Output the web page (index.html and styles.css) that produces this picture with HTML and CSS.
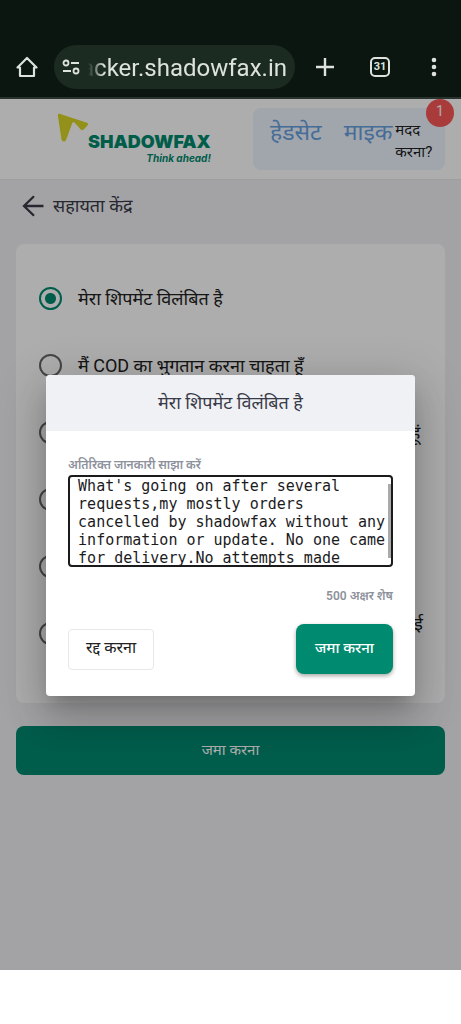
FILE: index.html
```html
<!DOCTYPE html>
<html lang="hi">
<head>
<meta charset="utf-8">
<meta name="viewport" content="width=device-width, initial-scale=1">
<title>सहायता केंद्र</title>
<link rel="stylesheet" href="styles.css">
</head>
<body>
<div class="browser">
  <button class="tool" aria-label="Home"><svg width="22" height="22" viewBox="0 0 22 22" fill="none" stroke="currentColor" stroke-width="2.200" stroke-linejoin="round"><path d="M1.500 11.500 11 2l9.500 9.500H18V20H4v-8.500z"/></svg></button>
  <div class="address">
    <svg width="18" height="16" viewBox="0 0 18 16" fill="none" stroke="currentColor" stroke-width="1.800"><circle cx="4" cy="4" r="2.500"/><path d="M9 4h8M1 12h8"/><circle cx="14" cy="12" r="2.500"/></svg>
    <span class="url">acker.shadowfax.in</span>
  </div>
  <div class="tools">
    <button class="tool" aria-label="New tab"><svg width="20" height="20" viewBox="0 0 20 20" fill="none" stroke="currentColor" stroke-width="2.400"><path d="M10 1v18M1 10h18"/></svg></button>
    <button class="tool tabs" aria-label="Tabs">31</button>
    <button class="tool menu" aria-label="Menu"><svg width="6" height="20" viewBox="0 0 6 20" fill="currentColor"><circle cx="3" cy="3" r="2.300"/><circle cx="3" cy="10" r="2.300"/><circle cx="3" cy="17" r="2.300"/></svg></button>
  </div>
</div>

<div class="app">
  <header class="header">
    <div class="logo">
      <svg class="mark" width="33" height="30" viewBox="0 0 33 30" fill="#dbd627"><path d="M2.500.800 30 9.800q2 .900.700 2.500l-4 4.300q-1.500 1.300-3 0l-6-6.800q-1.500-1.500-2.500.500L9 27.300q-1 1.600-2.700 1.200-1.600-.300-1.800-2L.800 2.300Q.600.300 2.500.800z"/></svg>
      <div class="words"><span class="brand">SHADOWFAX</span><span class="tagline">Think ahead!</span></div>
    </div>
    <a class="help" href="#help">
      <span class="help-icon">हेडसेट</span>
      <span class="help-icon">माइक</span>
      <span class="help-text">मदद करना?</span>
      <span class="badge">1</span>
    </a>
  </header>

  <main class="main">
    <div class="crumb">
      <button class="back" aria-label="Back"><svg width="22" height="22" viewBox="0 0 22 22" fill="none" stroke="currentColor" stroke-width="2.300"><path d="M21.500 11H2M12 1.200 2 11l10 9.800"/></svg></button>
      <h1 class="title">सहायता केंद्र</h1>
    </div>
    <form class="card" id="issues">
      <label class="option"><input type="radio" name="issue" checked><span>मेरा शिपमेंट विलंबित है</span></label>
      <label class="option"><input type="radio" name="issue"><span>मैं COD का भुगतान करना चाहता हूँ</span></label>
      <label class="option"><input type="radio" name="issue"><span>मैं अपनी डिलीवरी का पता और समय बदलना चाहता हूं</span></label>
      <label class="option"><input type="radio" name="issue"><span>मैं ऑर्डर रद्द करना चाहता हूँ</span></label>
      <label class="option"><input type="radio" name="issue"><span>मेरा नंबर बदलना है</span></label>
      <label class="option"><input type="radio" name="issue"><span>शिपमेंट डिलीवर दिखाया गया है पर मुझे नहीं मिला कोई पार्सल</span></label>
    </form>
    <button class="submit" type="submit" form="issues">जमा करना</button>
  </main>

  <div class="overlay">
    <form class="dialog" role="dialog" aria-labelledby="dialog-title">
      <h2 class="dialog-title" id="dialog-title">मेरा शिपमेंट विलंबित है</h2>
      <div class="dialog-body">
        <label class="field-label" for="info">अतिरिक्त जानकारी साझा करें</label>
        <div class="field">
          <textarea class="info" id="info">What's going on after several requests,my mostly orders cancelled by shadowfax without any information or update. No one came for delivery.No attempts made</textarea>
          <span class="thumb"></span>
        </div>
        <p class="count">500 अक्षर शेष</p>
        <div class="actions">
          <button class="cancel" type="button">रद्द करना</button>
          <button class="send" type="submit">जमा करना</button>
        </div>
      </div>
    </form>
  </div>
</div>
</body>
</html>
```
FILE: styles.css
```css
* { box-sizing: border-box; }
body {
  margin: 0;
  min-height: 100vh;
  display: flex;
  flex-direction: column;
  background: #fff;
  font-family: Roboto, "Noto Sans Devanagari", "Noto Sans", sans-serif;
  color: #212121;
}
button { font: inherit; border: 0; padding: 0; background: none; color: inherit; }
h1, h2, p { margin: 0; font-weight: 400; }
svg { display: block; flex: none; }

.browser {
  display: flex;
  align-items: center;
  padding: 45px 24px 8px 16px;
  background: #0c1611;
  border-bottom: 2px solid #29332d;
  color: #dde2dd;
}
.tool { display: grid; place-items: center; }
.tools {
  flex: 1;
  display: flex;
  align-items: center;
  margin-left: 20px;
}
.menu { margin-left: auto; }
.address {
  display: flex;
  align-items: center;
  gap: 8px;
  width: 241px;
  height: 44px;
  margin-left: 16px;
  padding: 0 8px;
  border-radius: 22px;
  background: #1c2b22;
}
.url {
  flex: 1;
  min-width: 0;
  display: flex;
  justify-content: flex-end;
  overflow: hidden;
  font-size: 24px;
  line-height: 40px;
  padding-top: 2px;
  white-space: nowrap;
  mask-image: linear-gradient(to right, transparent, #000 16px);
}
.tabs {
  width: 20px;
  height: 20px;
  margin-left: 35px;
  border: 2px solid currentColor;
  border-radius: 5px;
  font-size: 11px;
  line-height: 16px;
  font-weight: 700;
}

.app {
  position: relative;
  min-height: 871px;
  flex: none;
  display: flex;
  flex-direction: column;
  background: #f1f1f4;
}
.header {
  display: flex;
  align-items: center;
  justify-content: space-between;
  height: 81px;
  padding: 0 16px 0 57px;
  background: #fff;
  border-bottom: 1px solid #e8e8ea;
}
.logo { display: flex; align-items: flex-start; }
.mark { margin-right: -2px; }
.words { display: flex; flex-direction: column; align-items: flex-end; padding-top: 20px; color: #00896e; }
.brand { font: 900 18px/18px Inter, sans-serif; }
.tagline { font: italic 700 10px/14px Inter, sans-serif; }
.help {
  position: relative;
  display: flex;
  align-items: center;
  width: 192px;
  height: 62px;
  padding: 0 4px 8px 17px;
  border-radius: 8px;
  background: #eef4fe;
  color: #212121;
  text-decoration: none;
}
.help-icon { margin-right: 22px; padding-bottom: 4px; font-size: 23px; line-height: 24px; color: #679fe0; }
.help-icon + .help-icon { margin-right: 3px; }
.help-text { flex: 1; padding-top: 12px; font-size: 15px; line-height: 22px; }
.badge {
  position: absolute;
  top: -9px;
  right: -9px;
  width: 28px;
  height: 28px;
  border-radius: 50%;
  background: #fb5858;
  color: #fff;
  font-size: 14px;
  line-height: 24px;
  text-align: center;
}

.main { display: flex; flex-direction: column; padding: 0 16px; }
.crumb { display: flex; align-items: center; gap: 9px; height: 52px; padding-left: 6px; color: #383a48; }
.title { font-size: 18px; line-height: 28px; }
.card {
  margin-top: 12px;
  padding: 21px 16px 36px 23px;
  border-radius: 8px;
  background: #fff;
}
.option { display: flex; align-items: center; gap: 16px; height: 67px; font-size: 18px; line-height: 20px; }
.option input {
  appearance: none;
  flex: none;
  width: 23px;
  height: 23px;
  margin: 0;
  border: 2px solid #666;
  border-radius: 50%;
}
.option input:checked { border-color: #008a70; background: radial-gradient(circle, #008a70 5px, transparent 6px); }
.submit {
  height: 49px;
  margin-top: 23px;
  border-radius: 8px;
  background: #008a70;
  color: #fff;
  font-size: 15px;
}

.overlay {
  position: absolute;
  inset: 0;
  display: grid;
  place-items: center;
  padding-top: 2px;
  background: rgba(0, 0, 0, .32);
}
.dialog {
  width: 80%;
  border-radius: 4px;
  overflow: hidden;
  background: #fff;
  box-shadow: 0 11px 15px -7px rgba(0,0,0,.2), 0 24px 38px 3px rgba(0,0,0,.14), 0 9px 46px 8px rgba(0,0,0,.12);
}
.dialog-title {
  height: 56px;
  background: #f0f1f4;
  color: #383a48;
  font-size: 18px;
  line-height: 56px;
  text-align: center;
}
.dialog-body { display: flex; flex-direction: column; padding: 24px 22px 22px; }
.field-label { color: #8d919c; font-size: 12px; line-height: 20px; font-weight: 600; }
.field { position: relative; display: flex; }
.info {
  flex: 1;
  min-width: 0;
  height: 92px;
  padding: 0 0 0 8px;
  border: 2px solid #1b1b1d;
  border-radius: 4px;
  outline: 0;
  resize: none;
  overflow: hidden;
  background: #fff;
  color: #1b1b1d;
  font: 15px/18px "DejaVu Sans Mono", monospace;
}
.thumb { position: absolute; top: 9px; right: 2px; width: 3px; height: 74px; background: #aaa; }
.count { margin-top: 19px; color: #8d919c; font-size: 12px; line-height: 20px; font-weight: 600; text-align: right; }
.actions { display: flex; align-items: center; justify-content: space-between; margin-top: 18px; }
.cancel {
  width: 86px;
  height: 41px;
  border: 1px solid #e8e8ea;
  border-radius: 4px;
  font-size: 16px;
}
.send {
  width: 97px;
  height: 50px;
  border-radius: 8px;
  background: #008a70;
  color: #fff;
  font-size: 15px;
  font-weight: 500;
  box-shadow: 0 2px 4px rgba(0,0,0,.35);
}
```
